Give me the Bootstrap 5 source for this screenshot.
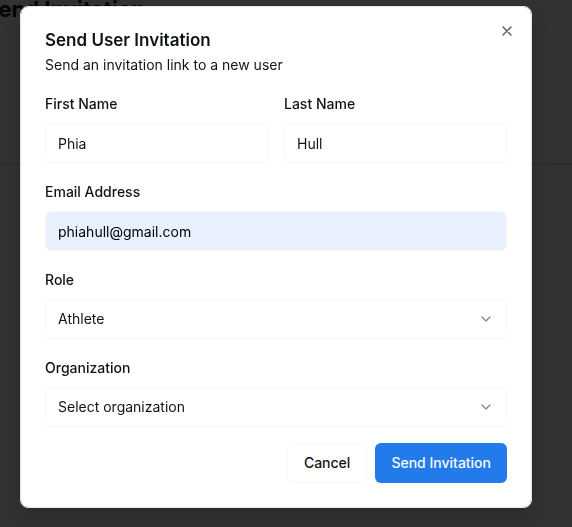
<!DOCTYPE html>
<html lang="en">
<head>
<meta charset="utf-8">
<meta name="viewport" content="width=device-width, initial-scale=1">
<title>Send User Invitation</title>
<link href="https://cdn.jsdelivr.net/npm/bootstrap@5.3.0/dist/css/bootstrap.min.css" rel="stylesheet">
<style>
  body { font-family: Inter, "Liberation Sans", sans-serif; font-size: 14px; line-height: 20px; color: #0f1419; background: #323232; overflow: hidden; }
  .page-top { background: #303332; border-bottom: 2px solid #2d2d2d; height: 165px; overflow: hidden; }
  .page-title { font-size: 22px; line-height: 32px; font-weight: 700; color: #050505; margin: -7px 0 0 -16px; }
  .invite-modal { padding-right: 20px; }
  .invite-dialog { max-width: 512px; margin: 6px auto; }
  .invite-box { border: 1px solid #dfe7ee; border-radius: 8px; padding: 24px; gap: 16px; box-shadow: 0 8px 16px rgba(0, 0, 0, .15); color: #0f1419; }
  .invite-heading { gap: 6px; }
  .invite-title { font-size: 17px; line-height: 18px; font-weight: 600; }
  .field-label { display: block; font-weight: 500; line-height: 26px; margin-bottom: 6px; }
  .field { height: 40px; padding: 8px 12px; font-size: 14px; line-height: 20px; color: #0f1419; border: 1px solid #f7f7f8; border-radius: 6px; background-color: #fff; }
  select.field { background-image: url("data:image/svg+xml,%3Csvg xmlns='http://www.w3.org/2000/svg' viewBox='0 0 24 24' fill='none' stroke='%2387898c' stroke-width='2' stroke-linecap='round' stroke-linejoin='round'%3E%3Cpath d='m6 9 6 6 6-6'/%3E%3C/svg%3E"); background-size: 16px 16px; background-position: right 12px center; }
  .field-filled { background-color: #e8f0fe; color: #000; }
  .action { height: 40px; padding: 8px 16px; font-size: 14px; line-height: 20px; font-weight: 500; border-radius: 6px; }
  .action-cancel { border: 1px solid #f7f7f8; background: #fff; color: #0f1419; }
  .action-send, .action-send:hover { border: 0; background: #237aeb; color: #f8fafc; }
  .close-x { top: 16px; right: 16px; width: 16px; height: 16px; color: #55585b; }
</style>
</head>
<body>
<header class="page-top">
  <h1 class="page-title">Send Invitation</h1>
</header>

<div class="modal invite-modal d-block" role="dialog" aria-modal="true" aria-labelledby="inviteTitle">
  <div class="modal-dialog invite-dialog">
    <div class="modal-content invite-box">
      <div class="d-flex flex-column invite-heading">
        <h2 class="invite-title mb-0" id="inviteTitle">Send User Invitation</h2>
        <p class="mb-0">Send an invitation link to a new user</p>
      </div>
      <form class="d-flex flex-column gap-3">
        <div class="row gx-3">
          <div class="col-6">
            <label class="field-label" for="firstName">First Name</label>
            <input class="form-control field" id="firstName" type="text" value="Phia">
          </div>
          <div class="col-6">
            <label class="field-label" for="lastName">Last Name</label>
            <input class="form-control field" id="lastName" type="text" value="Hull">
          </div>
        </div>
        <div>
          <label class="field-label" for="email">Email Address</label>
          <input class="form-control field field-filled" id="email" type="email" value="phiahull@gmail.com">
        </div>
        <div>
          <label class="field-label" for="role">Role</label>
          <select class="form-select field" id="role"><option>Athlete</option></select>
        </div>
        <div>
          <label class="field-label" for="organization">Organization</label>
          <select class="form-select field" id="organization"><option>Select organization</option></select>
        </div>
        <div class="d-flex justify-content-end gap-2">
          <button class="btn action action-cancel" type="button">Cancel</button>
          <button class="btn action action-send" type="button">Send Invitation</button>
        </div>
      </form>
      <button class="close-x btn p-0 border-0 position-absolute d-flex" type="button" aria-label="Close">
        <svg width="16" height="16" viewBox="0 0 24 24" fill="none" stroke="currentColor" stroke-width="2" stroke-linecap="round" stroke-linejoin="round" aria-hidden="true"><path d="M18 6 6 18M6 6l12 12"/></svg>
      </button>
    </div>
  </div>
</div>
<script src="https://cdn.jsdelivr.net/npm/bootstrap@5.3.0/dist/js/bootstrap.bundle.min.js"></script>
</body>
</html>
